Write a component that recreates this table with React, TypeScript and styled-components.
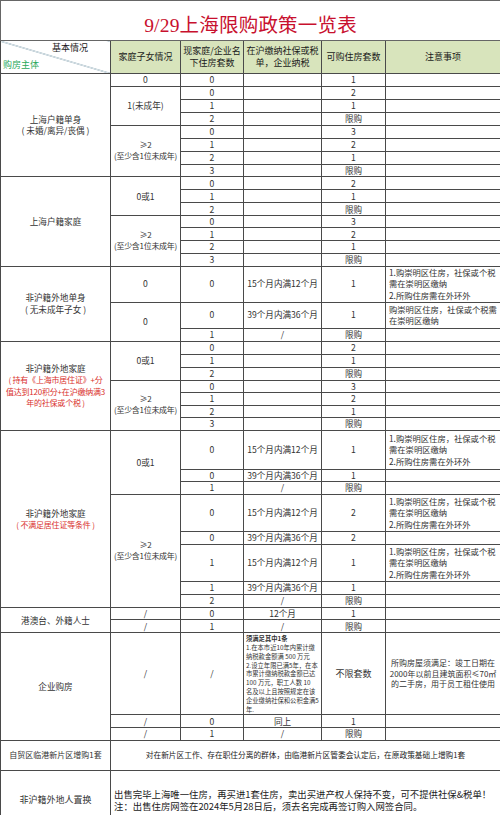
import React from "react";
import styled, { createGlobalStyle } from "styled-components";

const GlobalStyle = createGlobalStyle`
  body {
    margin: 0;
    background: #fff;
    font-family: "Noto Sans CJK SC", "Noto Sans", sans-serif;
  }
`;

const Page = styled.div`
  width: 500px;
  overflow: hidden;
`;

const Sheet = styled.table`
  width: 500px;
  border-collapse: collapse;
  table-layout: fixed;
  color: #333;
`;

const Row = styled.tr<{ $h: number }>`
  height: ${(p) => p.$h}px;
`;

const TitleCell = styled.td`
  border: 1px solid #666;
  text-align: center;
  vertical-align: middle;
  padding-top: 6px;
  font-family: "Liberation Serif", "Noto Sans CJK SC", serif;
  font-size: 19.5px;
  color: #c8102e;
  letter-spacing: 0.2px;
`;

const Head = styled.th`
  background: #d8e4bc;
  border: 1px solid #4a4a4a;
  font-weight: normal;
  font-size: 9px;
  line-height: 12px;
  color: #1a1a1a;
  text-align: center;
  vertical-align: middle;
  padding: 0 1px;
`;

const CornerHead = styled.th`
  border: 1px solid #4a4a4a;
  padding: 0;
  background: linear-gradient(
    to top right,
    transparent calc(50% - 0.6px),
    #6b8fa0 50%,
    transparent calc(50% + 0.6px)
  );
`;

const Corner = styled.div`
  height: 31px;
  display: flex;
  flex-direction: column;
  justify-content: space-between;
  font-weight: normal;
  font-size: 9px;
  line-height: 11px;
`;

const CornerTop = styled.span`
  align-self: flex-end;
  margin-right: 22px;
  color: #1a1a1a;
`;

const CornerBottom = styled.span`
  align-self: flex-start;
  margin-left: 2px;
  margin-bottom: 3px;
  color: #28a85a;
`;

const Cell = styled.td<{ $size?: number; $left?: boolean }>`
  border: 1px solid #4a4a4a;
  padding: 0 2px;
  font-size: ${(p) => p.$size ?? 8.6}px;
  line-height: 1.3;
  text-align: ${(p) => (p.$left ? "left" : "center")};
  vertical-align: middle;
  white-space: nowrap;
  overflow: hidden;
`;

// "≥2 (至少含1位未成年)" – packed a bit tighter to fit the column
const Kids = styled.td`
  border: 1px solid #4a4a4a;
  padding: 0;
  font-size: 8px;
  line-height: 1.35;
  letter-spacing: -0.3px;
  text-align: center;
  vertical-align: middle;
  white-space: nowrap;
  overflow: hidden;
`;

const Note = styled.td`
  border: 1px solid #4a4a4a;
  padding: 0 3px;
  font-size: 8.3px;
  line-height: 11.5px;
  text-align: left;
  vertical-align: middle;
  white-space: nowrap;
  overflow: hidden;
`;

const Fine = styled.td`
  border: 1px solid #4a4a4a;
  padding: 2px 2px 0;
  font-size: 6.3px;
  line-height: 8.8px;
  text-align: left;
  vertical-align: middle;
  white-space: nowrap;
  overflow: hidden;
`;

const Strong = styled.b`
  font-weight: bold;
`;

const Red = styled.span`
  color: #d9302c;
  font-size: 8px;
  letter-spacing: -0.2px;
`;

const Wide = styled.td<{ $size: number; $left?: boolean }>`
  border: 1px solid #4a4a4a;
  padding: 0 3px;
  font-size: ${(p) => p.$size}px;
  line-height: 12.5px;
  color: #222;
  text-align: ${(p) => (p.$left ? "left" : "center")};
  vertical-align: middle;
  white-space: nowrap;
`;

const TERM1 = "15个月内满12个月";
const TERM2 = "39个月内满36个月";

const NoteA = () => (
  <Note>
    1.购崇明区住房，社保或个税
    <br />
    需在崇明区缴纳
    <br />
    2.所购住房需在外环外
  </Note>
);

const Multi = ({ span }: { span: number }) => (
  <Kids rowSpan={span}>
    ≥2
    <br />
    (至少含1位未成年)
  </Kids>
);

type TailProps = { n: string; tax?: string; can: string };

// last three plain cells + empty note
const Tail = ({ n, tax = "", can }: TailProps) => (
  <>
    <Cell>{n}</Cell>
    <Cell>{tax}</Cell>
    <Cell>{can}</Cell>
    <Note />
  </>
);

const FamilyBlock = ({ label }: { label: React.ReactNode }) => (
  <>
    <Row $h={13}>
      {label}
      <Cell rowSpan={3}>0或1</Cell>
      <Tail n="0" can="2" />
    </Row>
    <Row $h={13}>
      <Tail n="1" can="1" />
    </Row>
    <Row $h={13}>
      <Tail n="2" can="限购" />
    </Row>
    <Row $h={12}>
      <Multi span={4} />
      <Tail n="0" can="3" />
    </Row>
    <Row $h={13}>
      <Tail n="1" can="2" />
    </Row>
    <Row $h={12}>
      <Tail n="2" can="1" />
    </Row>
    <Row $h={13}>
      <Tail n="3" can="限购" />
    </Row>
  </>
);

export default function App() {
  return (
    <Page>
      <GlobalStyle />
      <Sheet>
        <colgroup>
          <col style={{ width: 110 }} />
          <col style={{ width: 70 }} />
          <col style={{ width: 63 }} />
          <col style={{ width: 78 }} />
          <col style={{ width: 64 }} />
          <col style={{ width: 115 }} />
        </colgroup>
        <tbody>
          <Row $h={40}>
            <TitleCell colSpan={6}>9/29上海限购政策一览表</TitleCell>
          </Row>
          <Row $h={33}>
            <CornerHead>
              <Corner>
                <CornerTop>基本情况</CornerTop>
                <CornerBottom>购房主体</CornerBottom>
              </Corner>
            </CornerHead>
            <Head>家庭子女情况</Head>
            <Head>
              现家庭/企业名
              <br />
              下住房套数
            </Head>
            <Head>
              在沪缴纳社保或税
              <br />
              单，企业纳税
            </Head>
            <Head>可购住房套数</Head>
            <Head>注意事项</Head>
          </Row>

          {/* 上海户籍单身 */}
          <Row $h={13}>
            <Cell rowSpan={8}>
              上海户籍单身
              <br />( 未婚/离异/丧偶 )
            </Cell>
            <Cell>0</Cell>
            <Tail n="0" can="1" />
          </Row>
          <Row $h={13}>
            <Cell rowSpan={3}>1(未成年)</Cell>
            <Tail n="0" can="2" />
          </Row>
          <Row $h={13}>
            <Tail n="1" can="1" />
          </Row>
          <Row $h={13}>
            <Tail n="2" can="限购" />
          </Row>
          <Row $h={13}>
            <Multi span={4} />
            <Tail n="0" can="3" />
          </Row>
          <Row $h={13}>
            <Tail n="1" can="2" />
          </Row>
          <Row $h={13}>
            <Tail n="2" can="1" />
          </Row>
          <Row $h={12}>
            <Tail n="3" can="限购" />
          </Row>

          {/* 上海户籍家庭 */}
          <FamilyBlock label={<Cell rowSpan={7}>上海户籍家庭</Cell>} />

          {/* 非沪籍外地单身 */}
          <Row $h={36}>
            <Cell rowSpan={3}>
              非沪籍外地单身
              <br />( 无未成年子女 )
            </Cell>
            <Cell>0</Cell>
            <Cell>0</Cell>
            <Cell>{TERM1}</Cell>
            <Cell>1</Cell>
            <NoteA />
          </Row>
          <Row $h={26}>
            <Cell rowSpan={2}>0</Cell>
            <Cell>0</Cell>
            <Cell>{TERM2}</Cell>
            <Cell>1</Cell>
            <Note>
              购崇明区住房，社保或个税需
              <br />
              在崇明区缴纳
            </Note>
          </Row>
          <Row $h={13}>
            <Tail n="1" tax="/" can="限购" />
          </Row>

          {/* 非沪籍外地家庭（持有居住证） */}
          <FamilyBlock
            label={
              <Cell rowSpan={7}>
                非沪籍外地家庭
                <br />
                <Red>
                  ( 持有《上海市居住证》+分
                  <br />
                  值达到120积分+在沪缴纳满3
                  <br />
                  年的社保或个税 )
                </Red>
              </Cell>
            }
          />

          {/* 非沪籍外地家庭（不满足居住证） */}
          <Row $h={39}>
            <Cell rowSpan={8}>
              非沪籍外地家庭
              <br />
              <Red>( 不满足居住证等条件 )</Red>
            </Cell>
            <Cell rowSpan={3}>0或1</Cell>
            <Cell>0</Cell>
            <Cell>{TERM1}</Cell>
            <Cell>1</Cell>
            <NoteA />
          </Row>
          <Row $h={12}>
            <Tail n="0" tax={TERM2} can="1" />
          </Row>
          <Row $h={13}>
            <Tail n="1" tax="/" can="限购" />
          </Row>
          <Row $h={37}>
            <Multi span={5} />
            <Cell>0</Cell>
            <Cell>{TERM1}</Cell>
            <Cell>2</Cell>
            <NoteA />
          </Row>
          <Row $h={13}>
            <Tail n="0" tax={TERM2} can="2" />
          </Row>
          <Row $h={37}>
            <Cell>1</Cell>
            <Cell>{TERM1}</Cell>
            <Cell>1</Cell>
            <NoteA />
          </Row>
          <Row $h={13}>
            <Tail n="1" tax={TERM2} can="1" />
          </Row>
          <Row $h={13}>
            <Tail n="2" tax="/" can="限购" />
          </Row>

          {/* 港澳台、外籍人士 */}
          <Row $h={12}>
            <Cell rowSpan={2}>港澳台、外籍人士</Cell>
            <Cell>/</Cell>
            <Tail n="0" tax="12个月" can="1" />
          </Row>
          <Row $h={13}>
            <Cell>/</Cell>
            <Tail n="1" tax="/" can="限购" />
          </Row>

          {/* 企业购房 */}
          <Row $h={82}>
            <Cell rowSpan={3}>企业购房</Cell>
            <Cell>/</Cell>
            <Cell>/</Cell>
            <Fine>
              <Strong>须满足其中1条</Strong>
              <br />
              1.在本市近10年内累计缴
              <br />
              纳税款金额满 500 万元
              <br />
              2.设立年限已满5年，在本
              <br />
              市累计缴纳税款金额已达
              <br />
              100 万元，职工人数 10
              <br />
              名及以上且按照规定在该
              <br />
              企业缴纳社保和公积金满5
              <br />
              年.
            </Fine>
            <Cell $size={9}>不限套数</Cell>
            <Cell $size={8}>
              所购房屋须满足：竣工日期在
              <br />
              2000年以前且建筑面积≤70㎡
              <br />
              的二手房，用于员工租住使用
            </Cell>
          </Row>
          <Row $h={13}>
            <Cell>/</Cell>
            <Tail n="0" tax="同上" can="1" />
          </Row>
          <Row $h={12}>
            <Cell>/</Cell>
            <Tail n="1" tax="/" can="限购" />
          </Row>

          {/* 自贸区 */}
          <Row $h={30}>
            <Cell $size={8}>自贸区临港新片区增购1套</Cell>
            <Wide colSpan={5} $size={7.7}>
              对在新片区工作、存在职住分离的群体，由临港新片区管委会认定后，在原政策基础上增购1套
            </Wide>
          </Row>

          {/* 非沪籍外地人置换 */}
          <Row $h={60}>
            <Cell $size={9}>非沪籍外地人置换</Cell>
            <Wide colSpan={5} $size={9.4} $left>
              出售完毕上海唯一住房，再买进1套住房，卖出买进产权人保持不变，可不提供社保&amp;税单！
              <br />
              注：出售住房网签在2024年5月28日后，须去名完成再签订购入网签合同。
            </Wide>
          </Row>
        </tbody>
      </Sheet>
    </Page>
  );
}
